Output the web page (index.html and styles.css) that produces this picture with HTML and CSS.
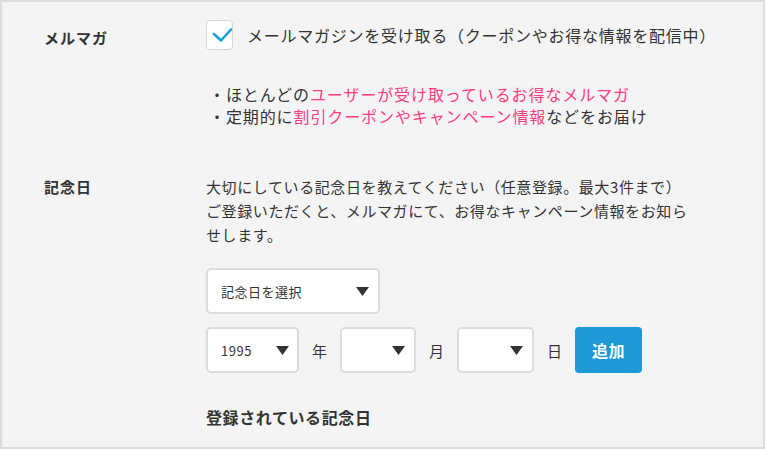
FILE: index.html
```html
<!DOCTYPE html>
<html lang="ja">

<head>
    <meta charset="UTF-8">
    <meta name="viewport" content="width=device-width, initial-scale=1.0">
    <title>会員情報</title>
    <link rel="stylesheet" href="styles.css">
</head>

<body>
    <div class="panel">
        <div class="row row-mail">
            <div class="label label-mail">メルマガ</div>
            <div class="content">
                <label class="check">
                    <span class="check-box">
                        <svg width="31" height="30" viewBox="0 0 31 30">
                            <polyline points="8,14 15,20.5 25,9.5" fill="none" stroke="#1a9ee0" stroke-width="2.6" stroke-linecap="round" stroke-linejoin="round" />
                        </svg>
                    </span>
                    <span class="check-text">メールマガジンを受け取る（クーポンやお得な情報を配信中）</span>
                </label>
                <ul class="points">
                    <li>・ほとんどの<span class="pink">ユーザーが受け取っているお得なメルマガ</span></li>
                    <li>・定期的に<span class="pink">割引クーポンやキャンペーン情報</span>などをお届け</li>
                </ul>
            </div>
        </div>

        <div class="row row-day">
            <div class="label">記念日</div>
            <div class="content">
                <p class="desc">大切にしている記念日を教えてください（任意登録。最大3件まで）<br>ご登録いただくと、メルマガにて、お得なキャンペーン情報をお知らせします。</p>

                <div class="select select-kind">
                    <span>記念日を選択</span>
                    <svg class="arrow" width="13" height="9" viewBox="0 0 13 9"><polygon points="0,0 13,0 6.5,9" fill="#333" /></svg>
                </div>

                <div class="date-row">
                    <div class="select select-year">
                        <span>1995</span>
                        <svg class="arrow" width="13" height="9" viewBox="0 0 13 9"><polygon points="0,0 13,0 6.5,9" fill="#333" /></svg>
                    </div>
                    <span class="unit">年</span>
                    <div class="select select-month">
                        <span></span>
                        <svg class="arrow" width="13" height="9" viewBox="0 0 13 9"><polygon points="0,0 13,0 6.5,9" fill="#333" /></svg>
                    </div>
                    <span class="unit">月</span>
                    <div class="select select-day">
                        <span></span>
                        <svg class="arrow" width="13" height="9" viewBox="0 0 13 9"><polygon points="0,0 13,0 6.5,9" fill="#333" /></svg>
                    </div>
                    <span class="unit">日</span>
                    <button class="add-btn" type="button">追加</button>
                </div>

                <h3 class="saved">登録されている記念日</h3>
            </div>
        </div>
    </div>
</body>

</html>
```

FILE: styles.css
```css
* {
    box-sizing: border-box;
}

body {
    margin: 0;
    font-family: "Noto Sans CJK JP", "Noto Sans", sans-serif;
    color: #333;
}

.panel {
    height: 449px;
    overflow: hidden;
    background: #f4f4f4;
    border: 2px solid #dcdcdc;
    padding: 18px 0 0 42px;
}

.row {
    display: flex;
}

.label {
    width: 162px;
    flex-shrink: 0;
    font-size: 15px;
    font-weight: bold;
    letter-spacing: 1px;
    line-height: 24px;
}

.label-mail {
    margin-top: 6px;
}

.content {
    width: 510px;
}

/* checkbox */
.check {
    display: flex;
    align-items: center;
}

.check-box {
    width: 31px;
    height: 30px;
    background: #fff;
    border: 1px solid #d4d6dc;
    border-radius: 4px;
    margin-right: 14px;
    position: relative;
}

.check-box svg {
    position: absolute;
    top: -1px;
    left: -1px;
}

.check-text {
    font-size: 16px;
    letter-spacing: 0.75px;
    line-height: 30px;
    white-space: nowrap;
}

.points {
    list-style: none;
    margin: 33px 0 0;
    padding: 0 0 0 3px;
    font-size: 16px;
    letter-spacing: 0.9px;
    line-height: 22px;
}

.pink {
    color: #ff3d7f;
}

.row-day {
    margin-top: 48px;
}

.desc {
    margin: 0;
    font-size: 15px;
    letter-spacing: 0.6px;
    line-height: 24px;
    width: 492px;
}

/* selects */
.select {
    height: 46px;
    background: #fff;
    border: 2px solid #dcdcdc;
    border-radius: 5px;
    display: flex;
    align-items: center;
    justify-content: space-between;
    padding: 0 9px 0 13px;
    font-size: 13px;
    letter-spacing: 0.5px;
}

.select-kind {
    width: 174px;
    margin-top: 21px;
}

.select-year {
    width: 93px;
    padding-right: 8px;
}

.select-month {
    width: 76px;
}

.select-day {
    width: 77px;
}

.date-row {
    display: flex;
    align-items: center;
    gap: 13px;
    margin-top: 13px;
}

.unit {
    font-size: 15px;
    width: 15px;
    text-align: center;
}

.add-btn {
    width: 67px;
    height: 46px;
    border: 0;
    border-radius: 4px;
    background: #1e98d7;
    color: #fff;
    font-family: inherit;
    font-size: 16px;
    font-weight: bold;
    letter-spacing: 0.5px;
}

.saved {
    margin: 32px 0 0;
    font-size: 16px;
    letter-spacing: 0.6px;
    line-height: 24px;
}
```
